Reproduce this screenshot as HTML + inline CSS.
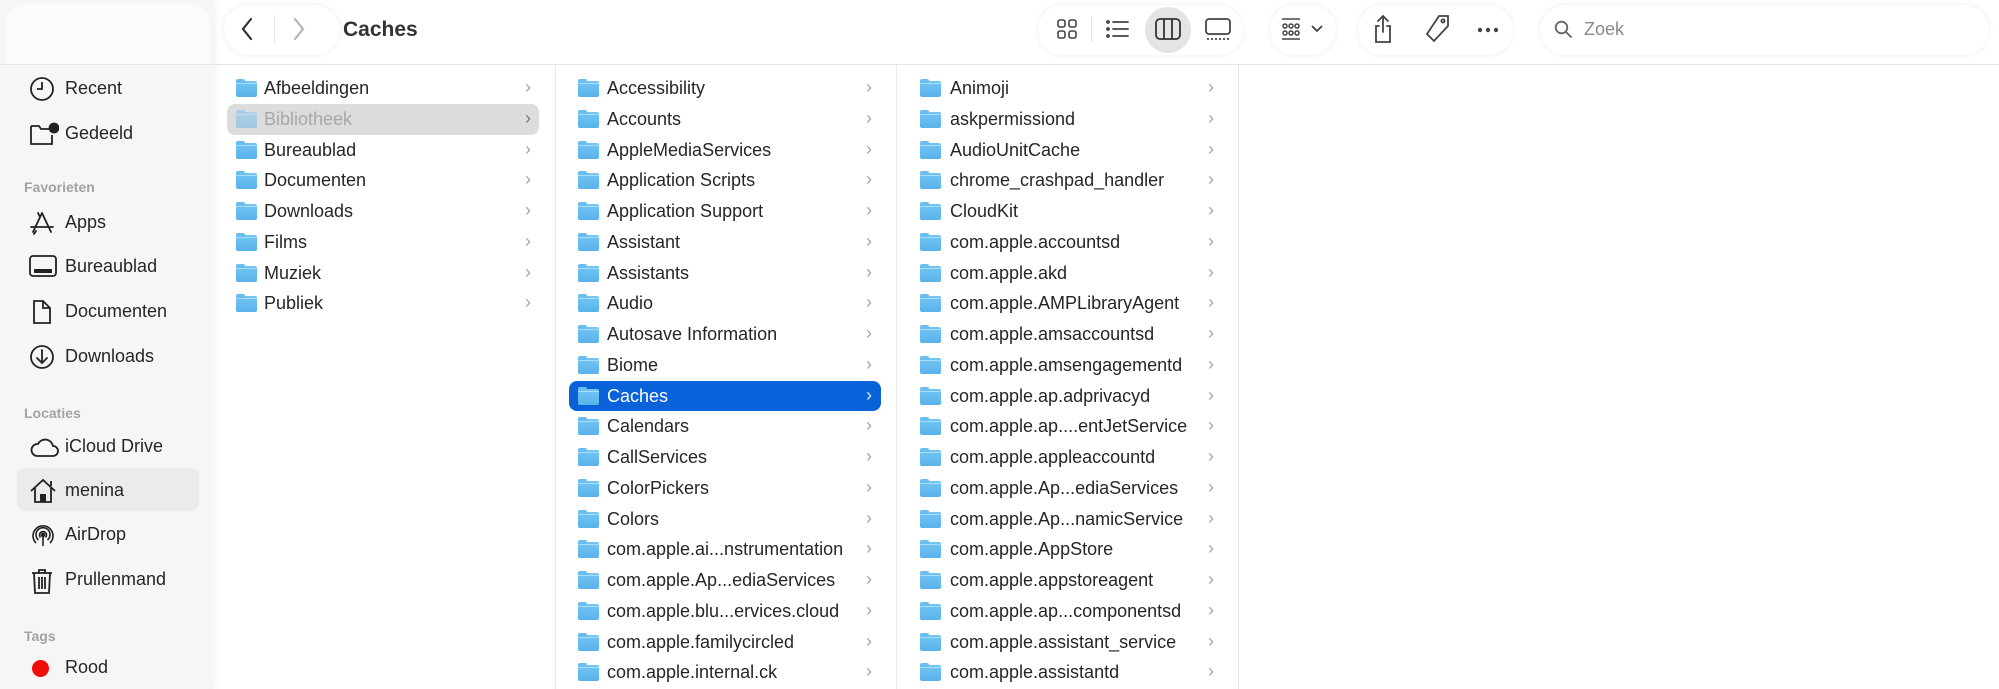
<!DOCTYPE html>
<html><head><meta charset="utf-8"><style>
*{margin:0;padding:0;box-sizing:border-box}
body{width:1999px;height:689px;overflow:hidden;background:#fff;font-family:"Liberation Sans",sans-serif;color:#262626;position:relative}
.abs{position:absolute}
#side{left:0;top:0;width:213px;height:689px;background:#f6f6f6;box-shadow:2px 0 8px rgba(0,0,0,.06)}
#sidetop{left:6px;top:4px;width:204px;height:60px;background:#fbfbfb;border-radius:18px 18px 0 0}
#hdrline{left:0;top:64px;width:1999px;height:1px;background:#e4e4e4}
.cap{position:absolute;top:5px;height:50px;background:#fff;border-radius:25px;box-shadow:0 0 6px rgba(0,0,0,.08)}
.si{position:absolute;left:0;width:213px;height:30px;font-size:18px;line-height:30px}
.si svg{position:absolute;left:29px;top:3px}
.si span{position:absolute;left:65px}
.sec{position:absolute;left:24px;font-size:14px;font-weight:bold;color:#a3a3a3}
.col{position:absolute;top:73px}
.row{position:relative;height:30.75px;line-height:30.75px;font-size:18px;white-space:nowrap}
.row .f{position:absolute;top:8px;width:21px;height:16px;border-radius:2px;background:linear-gradient(#74c6f3,#58b2ea)}
.row .f:before{content:"";position:absolute;left:0;top:-2px;width:9px;height:4px;border-radius:2px 2px 0 0;background:#6bbdf0}
.row .f:after{content:"";position:absolute;left:0;top:2px;width:21px;height:1px;background:#a8dcf8}
.row .c{position:absolute;font-size:18px;font-weight:normal;color:#a5a5a5;top:-1px}
.sel1{background:#dcdcdc;border-radius:8px;color:#a8a8a8}
.sel2{background:#0a62db;border-radius:8px;color:#fff}
.sel2 .c{color:#dce8fa}
</style></head><body>
<div id="side" class="abs"></div>
<div id="sidetop" class="abs"></div>
<div id="hdrline" class="abs"></div>

<div class="cap" style="left:224px;width:116px"></div>
<svg class="abs" style="left:240px;top:17px" width="14" height="24"><path d="M11 2 L3 12 L11 22" fill="none" stroke="#333" stroke-width="2.2" stroke-linecap="round"/></svg>
<div class="abs" style="left:274px;top:15px;width:1px;height:28px;background:#e8e8e8"></div>
<svg class="abs" style="left:292px;top:17px" width="14" height="24"><path d="M3 2 L11 12 L3 22" fill="none" stroke="#b5b5b5" stroke-width="2.2" stroke-linecap="round"/></svg>
<div class="abs" style="left:343px;top:18px;font-size:21px;font-weight:bold;color:#333">Caches</div>

<div class="cap" style="left:1038px;width:205px"></div>
<svg class="abs" style="left:1057px;top:19px" width="20" height="20" fill="none" stroke="#444" stroke-width="1.6"><rect x="1" y="1" width="7" height="7" rx="2"/><rect x="12" y="1" width="7" height="7" rx="2"/><rect x="1" y="12" width="7" height="7" rx="2"/><rect x="12" y="12" width="7" height="7" rx="2"/></svg>
<div class="abs" style="left:1091px;top:16px;width:1px;height:26px;background:#e6e6e6"></div>
<svg class="abs" style="left:1106px;top:19px" width="24" height="20" stroke="#444" stroke-width="1.8" stroke-linecap="round"><path d="M7 3H22M7 10H22M7 17H22"/><circle cx="2" cy="3" r="1" fill="#444"/><circle cx="2" cy="10" r="1" fill="#444"/><circle cx="2" cy="17" r="1" fill="#444"/></svg>
<div class="abs" style="left:1145px;top:7px;width:46px;height:46px;border-radius:23px;background:#e4e4e4"></div>
<svg class="abs" style="left:1155px;top:18px" width="26" height="22" fill="none" stroke="#333" stroke-width="1.8"><rect x="1" y="1" width="24" height="20" rx="4"/><path d="M9 1V21M17 1V21"/></svg>
<svg class="abs" style="left:1205px;top:18px" width="26" height="24" fill="none" stroke="#444" stroke-width="1.8"><rect x="1" y="1" width="24" height="15" rx="3"/><path d="M2 21H24" stroke-dasharray="2 2"/></svg>

<div class="cap" style="left:1270px;width:66px"></div>
<svg class="abs" style="left:1281px;top:18px" width="20" height="22" stroke="#444" stroke-width="1.5" fill="none"><path d="M1 1H19M1 21H19"/><circle cx="4" cy="8" r="2"/><circle cx="10" cy="8" r="2"/><circle cx="16" cy="8" r="2"/><circle cx="4" cy="15" r="2"/><circle cx="10" cy="15" r="2"/><circle cx="16" cy="15" r="2"/></svg>
<svg class="abs" style="left:1311px;top:25px" width="12" height="8"><path d="M1 1L6 6L11 1" fill="none" stroke="#444" stroke-width="1.8"/></svg>

<div class="cap" style="left:1358px;width:155px"></div>
<svg class="abs" style="left:1373px;top:14px" width="20" height="30" fill="none" stroke="#444" stroke-width="1.8" stroke-linecap="round"><path d="M10 2V18M5 7L10 2L15 7"/><path d="M6 12H3V28H17V12H14"/></svg>
<svg class="abs" style="left:1425px;top:14px" width="26" height="30" fill="none" stroke="#444" stroke-width="1.8"><path d="M14 2H23V12L9 27L2 20Z"/><circle cx="18" cy="7" r="1.6"/></svg>
<svg class="abs" style="left:1477px;top:27px" width="22" height="6" fill="#444"><circle cx="3" cy="3" r="2.2"/><circle cx="11" cy="3" r="2.2"/><circle cx="19" cy="3" r="2.2"/></svg>

<div class="cap" style="left:1540px;width:449px"></div>
<svg class="abs" style="left:1554px;top:20px" width="18" height="18" fill="none" stroke="#666" stroke-width="1.8"><circle cx="7.5" cy="7.5" r="5.8"/><path d="M12 12L17 17" stroke-linecap="round"/></svg>
<div class="abs" style="left:1584px;top:19px;font-size:18px;color:#8a8a8a">Zoek</div>

<div class="abs" style="left:17px;top:468px;width:182px;height:43px;background:#ebebeb;border-radius:9px"></div>
<div class="si" style="top:73px"><svg width="26" height="26" fill="none" stroke="#222" stroke-width="1.8"><circle cx="13" cy="13" r="11"/><path d="M13 6V13H8"/></svg><span>Recent</span></div>
<div class="si" style="top:118px"><svg width="30" height="26" fill="none" stroke="#222" stroke-width="1.8"><path d="M2 5H10L12 8H20M2 5V23H23V14"/><circle cx="25" cy="7" r="4.5" fill="#222"/></svg><span>Gedeeld</span></div>
<div class="sec" style="top:179px">Favorieten</div>
<div class="si" style="top:207px"><svg width="26" height="26" fill="none" stroke="#222" stroke-width="1.8" stroke-linecap="round"><path d="M13 3L4 22M13 3L22 22M9 3L11 7M2 17H24M7 21L5 24"/></svg><span>Apps</span></div>
<div class="si" style="top:251px"><svg width="28" height="24" fill="none" stroke="#222" stroke-width="1.8"><rect x="1" y="2" width="26" height="20" rx="3"/><rect x="5" y="15" width="18" height="4" fill="#222" stroke="none"/></svg><span>Bureaublad</span></div>
<div class="si" style="top:296px"><svg width="26" height="26" fill="none" stroke="#222" stroke-width="1.8"><path d="M5 2H14L21 9V24H5Z M14 2V9H21"/></svg><span>Documenten</span></div>
<div class="si" style="top:341px"><svg width="26" height="26" fill="none" stroke="#222" stroke-width="1.8" stroke-linecap="round"><circle cx="13" cy="13" r="11"/><path d="M13 6V19M8 14L13 19L18 14"/></svg><span>Downloads</span></div>
<div class="sec" style="top:405px">Locaties</div>
<div class="si" style="top:431px"><svg width="30" height="26" fill="none" stroke="#222" stroke-width="1.8"><path d="M8 22H24A5 5 0 0 0 24 12A8 8 0 0 0 9 10A6 6 0 0 0 8 22Z"/></svg><span>iCloud Drive</span></div>
<div class="si" style="top:475px"><svg width="30" height="26" fill="none" stroke="#222" stroke-width="1.8"><path d="M2 13L14 2L26 13M6 10V24H22V10M22 3V8"/><rect x="11" y="16" width="6" height="8" fill="#222" stroke="none"/></svg><span>menina</span></div>
<div class="si" style="top:519px"><svg width="28" height="26" fill="none" stroke="#222" stroke-width="1.6"><path d="M7 21A10 10 0 1 1 21 21M9.5 18A7 7 0 1 1 18.5 18M11.5 15.5A3.5 3.5 0 1 1 16.5 15.5"/><circle cx="14" cy="13" r="1.5" fill="#222"/><path d="M14 15V24"/></svg><span>AirDrop</span></div>
<div class="si" style="top:564px"><svg width="26" height="28" fill="none" stroke="#222" stroke-width="1.8"><path d="M3 6H23M10 6V3H16V6M5 6L6 26H20L21 6M10 10V22M13 10V22M16 10V22"/></svg><span>Prullenmand</span></div>
<div class="sec" style="top:628px">Tags</div>
<div class="abs" style="left:32px;top:660px;width:17px;height:17px;border-radius:50%;background:#f20d0d"></div>
<div class="abs" style="left:65px;top:657px;font-size:18px">Rood</div>

<div class="abs" style="left:555px;top:65px;width:1px;height:624px;background:#e8e8e8"></div>
<div class="abs" style="left:896px;top:65px;width:1px;height:624px;background:#e8e8e8"></div>
<div class="abs" style="left:1238px;top:65px;width:1px;height:624px;background:#e8e8e8"></div>

<div class="col" style="left:227px;width:312px">
<div class="row"><i class="f" style="left:9px"></i><span style="position:absolute;left:37px">Afbeeldingen</span><b class="c" style="left:298px">›</b></div>
<div class="row sel1"><i class="f" style="left:9px;opacity:.45"></i><span style="position:absolute;left:37px">Bibliotheek</span><b class="c" style="left:298px;color:#777">›</b></div>
<div class="row"><i class="f" style="left:9px"></i><span style="position:absolute;left:37px">Bureaublad</span><b class="c" style="left:298px">›</b></div>
<div class="row"><i class="f" style="left:9px"></i><span style="position:absolute;left:37px">Documenten</span><b class="c" style="left:298px">›</b></div>
<div class="row"><i class="f" style="left:9px"></i><span style="position:absolute;left:37px">Downloads</span><b class="c" style="left:298px">›</b></div>
<div class="row"><i class="f" style="left:9px"></i><span style="position:absolute;left:37px">Films</span><b class="c" style="left:298px">›</b></div>
<div class="row"><i class="f" style="left:9px"></i><span style="position:absolute;left:37px">Muziek</span><b class="c" style="left:298px">›</b></div>
<div class="row"><i class="f" style="left:9px"></i><span style="position:absolute;left:37px">Publiek</span><b class="c" style="left:298px">›</b></div>
</div>

<div class="col" style="left:569px;width:312px">
<div class="row"><i class="f" style="left:9px"></i><span style="position:absolute;left:38px">Accessibility</span><b class="c" style="left:297px">›</b></div>
<div class="row"><i class="f" style="left:9px"></i><span style="position:absolute;left:38px">Accounts</span><b class="c" style="left:297px">›</b></div>
<div class="row"><i class="f" style="left:9px"></i><span style="position:absolute;left:38px">AppleMediaServices</span><b class="c" style="left:297px">›</b></div>
<div class="row"><i class="f" style="left:9px"></i><span style="position:absolute;left:38px">Application Scripts</span><b class="c" style="left:297px">›</b></div>
<div class="row"><i class="f" style="left:9px"></i><span style="position:absolute;left:38px">Application Support</span><b class="c" style="left:297px">›</b></div>
<div class="row"><i class="f" style="left:9px"></i><span style="position:absolute;left:38px">Assistant</span><b class="c" style="left:297px">›</b></div>
<div class="row"><i class="f" style="left:9px"></i><span style="position:absolute;left:38px">Assistants</span><b class="c" style="left:297px">›</b></div>
<div class="row"><i class="f" style="left:9px"></i><span style="position:absolute;left:38px">Audio</span><b class="c" style="left:297px">›</b></div>
<div class="row"><i class="f" style="left:9px"></i><span style="position:absolute;left:38px">Autosave Information</span><b class="c" style="left:297px">›</b></div>
<div class="row"><i class="f" style="left:9px"></i><span style="position:absolute;left:38px">Biome</span><b class="c" style="left:297px">›</b></div>
<div class="row sel2"><i class="f" style="left:9px"></i><span style="position:absolute;left:38px">Caches</span><b class="c" style="left:297px">›</b></div>
<div class="row"><i class="f" style="left:9px"></i><span style="position:absolute;left:38px">Calendars</span><b class="c" style="left:297px">›</b></div>
<div class="row"><i class="f" style="left:9px"></i><span style="position:absolute;left:38px">CallServices</span><b class="c" style="left:297px">›</b></div>
<div class="row"><i class="f" style="left:9px"></i><span style="position:absolute;left:38px">ColorPickers</span><b class="c" style="left:297px">›</b></div>
<div class="row"><i class="f" style="left:9px"></i><span style="position:absolute;left:38px">Colors</span><b class="c" style="left:297px">›</b></div>
<div class="row"><i class="f" style="left:9px"></i><span style="position:absolute;left:38px">com.apple.ai...nstrumentation</span><b class="c" style="left:297px">›</b></div>
<div class="row"><i class="f" style="left:9px"></i><span style="position:absolute;left:38px">com.apple.Ap...ediaServices</span><b class="c" style="left:297px">›</b></div>
<div class="row"><i class="f" style="left:9px"></i><span style="position:absolute;left:38px">com.apple.blu...ervices.cloud</span><b class="c" style="left:297px">›</b></div>
<div class="row"><i class="f" style="left:9px"></i><span style="position:absolute;left:38px">com.apple.familycircled</span><b class="c" style="left:297px">›</b></div>
<div class="row"><i class="f" style="left:9px"></i><span style="position:absolute;left:38px">com.apple.internal.ck</span><b class="c" style="left:297px">›</b></div>
</div>

<div class="col" style="left:910px;width:312px">
<div class="row"><i class="f" style="left:10px"></i><span style="position:absolute;left:40px">Animoji</span><b class="c" style="left:298px">›</b></div>
<div class="row"><i class="f" style="left:10px"></i><span style="position:absolute;left:40px">askpermissiond</span><b class="c" style="left:298px">›</b></div>
<div class="row"><i class="f" style="left:10px"></i><span style="position:absolute;left:40px">AudioUnitCache</span><b class="c" style="left:298px">›</b></div>
<div class="row"><i class="f" style="left:10px"></i><span style="position:absolute;left:40px">chrome_crashpad_handler</span><b class="c" style="left:298px">›</b></div>
<div class="row"><i class="f" style="left:10px"></i><span style="position:absolute;left:40px">CloudKit</span><b class="c" style="left:298px">›</b></div>
<div class="row"><i class="f" style="left:10px"></i><span style="position:absolute;left:40px">com.apple.accountsd</span><b class="c" style="left:298px">›</b></div>
<div class="row"><i class="f" style="left:10px"></i><span style="position:absolute;left:40px">com.apple.akd</span><b class="c" style="left:298px">›</b></div>
<div class="row"><i class="f" style="left:10px"></i><span style="position:absolute;left:40px">com.apple.AMPLibraryAgent</span><b class="c" style="left:298px">›</b></div>
<div class="row"><i class="f" style="left:10px"></i><span style="position:absolute;left:40px">com.apple.amsaccountsd</span><b class="c" style="left:298px">›</b></div>
<div class="row"><i class="f" style="left:10px"></i><span style="position:absolute;left:40px">com.apple.amsengagementd</span><b class="c" style="left:298px">›</b></div>
<div class="row"><i class="f" style="left:10px"></i><span style="position:absolute;left:40px">com.apple.ap.adprivacyd</span><b class="c" style="left:298px">›</b></div>
<div class="row"><i class="f" style="left:10px"></i><span style="position:absolute;left:40px">com.apple.ap....entJetService</span><b class="c" style="left:298px">›</b></div>
<div class="row"><i class="f" style="left:10px"></i><span style="position:absolute;left:40px">com.apple.appleaccountd</span><b class="c" style="left:298px">›</b></div>
<div class="row"><i class="f" style="left:10px"></i><span style="position:absolute;left:40px">com.apple.Ap...ediaServices</span><b class="c" style="left:298px">›</b></div>
<div class="row"><i class="f" style="left:10px"></i><span style="position:absolute;left:40px">com.apple.Ap...namicService</span><b class="c" style="left:298px">›</b></div>
<div class="row"><i class="f" style="left:10px"></i><span style="position:absolute;left:40px">com.apple.AppStore</span><b class="c" style="left:298px">›</b></div>
<div class="row"><i class="f" style="left:10px"></i><span style="position:absolute;left:40px">com.apple.appstoreagent</span><b class="c" style="left:298px">›</b></div>
<div class="row"><i class="f" style="left:10px"></i><span style="position:absolute;left:40px">com.apple.ap...componentsd</span><b class="c" style="left:298px">›</b></div>
<div class="row"><i class="f" style="left:10px"></i><span style="position:absolute;left:40px">com.apple.assistant_service</span><b class="c" style="left:298px">›</b></div>
<div class="row"><i class="f" style="left:10px"></i><span style="position:absolute;left:40px">com.apple.assistantd</span><b class="c" style="left:298px">›</b></div>
</div>
</body></html>
